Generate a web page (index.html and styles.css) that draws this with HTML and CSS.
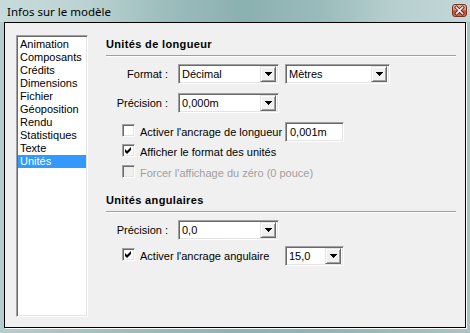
FILE: index.html
```html
<!DOCTYPE html>
<html lang="fr">
<head>
<meta charset="utf-8">
<title>Infos sur le modèle</title>
<link rel="stylesheet" href="styles.css">
</head>
<body>
<div class="window">
  <div class="titlebar">
    <span class="title">Infos sur le modèle</span>
    <span class="close">
      <svg width="13" height="11" viewBox="0 0 13 11"><path d="M3.5 2.5 L9.5 8.5 M9.5 2.5 L3.5 8.5" stroke="#5a1a10" stroke-width="3.2" stroke-linecap="square"/><path d="M3.5 2.5 L9.5 8.5 M9.5 2.5 L3.5 8.5" stroke="#fff" stroke-width="1.6" stroke-linecap="square"/></svg>
    </span>
  </div>
  <div class="frame">
    <div class="panel">
      <ul class="list">
        <li>Animation</li>
        <li>Composants</li>
        <li>Crédits</li>
        <li>Dimensions</li>
        <li>Fichier</li>
        <li>Géoposition</li>
        <li>Rendu</li>
        <li>Statistiques</li>
        <li>Texte</li>
        <li class="selected">Unités</li>
      </ul>
      <div class="content">
        <div class="group-title">Unités de longueur</div>
        <div class="field row-format">
          <span class="lbl">Format :</span>
          <div class="combo w-main"><span class="val">Décimal</span><span class="btn"><svg width="7" height="4" viewBox="0 0 7 4"><rect x="0" y="0" width="7" height="1"/><rect x="1" y="1" width="5" height="1"/><rect x="2" y="2" width="3" height="1"/><rect x="3" y="3" width="1" height="1"/></svg></span></div>
          <div class="combo w-unit"><span class="val">Mètres</span><span class="btn"><svg width="7" height="4" viewBox="0 0 7 4"><rect x="0" y="0" width="7" height="1"/><rect x="1" y="1" width="5" height="1"/><rect x="2" y="2" width="3" height="1"/><rect x="3" y="3" width="1" height="1"/></svg></span></div>
        </div>
        <div class="field row-prec">
          <span class="lbl">Précision :</span>
          <div class="combo w-main"><span class="val">0,000m</span><span class="btn"><svg width="7" height="4" viewBox="0 0 7 4"><rect x="0" y="0" width="7" height="1"/><rect x="1" y="1" width="5" height="1"/><rect x="2" y="2" width="3" height="1"/><rect x="3" y="3" width="1" height="1"/></svg></span></div>
        </div>
        <div class="check-row row-snap">
          <span class="box"></span>
          <span class="ctext">Activer l'ancrage de longueur</span>
          <div class="textbox w-small">0,001m</div>
        </div>
        <div class="check-row short row-show">
          <span class="box"><svg width="9" height="9" viewBox="0 0 9 9"><polygon points="1,3 3,5 7,1 7,4 3,8 1,6"/></svg></span>
          <span class="ctext">Afficher le format des unités</span>
        </div>
        <div class="check-row short disabled row-force">
          <span class="box"></span>
          <span class="ctext">Forcer l'affichage du zéro (0 pouce)</span>
        </div>

        <div class="group-title second">Unités angulaires</div>
        <div class="field row-prec2">
          <span class="lbl">Précision :</span>
          <div class="combo w-main"><span class="val">0,0</span><span class="btn"><svg width="7" height="4" viewBox="0 0 7 4"><rect x="0" y="0" width="7" height="1"/><rect x="1" y="1" width="5" height="1"/><rect x="2" y="2" width="3" height="1"/><rect x="3" y="3" width="1" height="1"/></svg></span></div>
        </div>
        <div class="check-row row-angle">
          <span class="box"><svg width="9" height="9" viewBox="0 0 9 9"><polygon points="1,3 3,5 7,1 7,4 3,8 1,6"/></svg></span>
          <span class="ctext">Activer l'ancrage angulaire</span>
          <div class="combo w-small"><span class="val">15,0</span><span class="btn"><svg width="7" height="4" viewBox="0 0 7 4"><rect x="0" y="0" width="7" height="1"/><rect x="1" y="1" width="5" height="1"/><rect x="2" y="2" width="3" height="1"/><rect x="3" y="3" width="1" height="1"/></svg></span></div>
        </div>
      </div>
    </div>
  </div>
</div>
</body>
</html>
```
FILE: styles.css
```css
* { box-sizing: border-box; }
html, body { margin: 0; padding: 0; }
body {
  width: 470px;
  height: 333px;
  overflow: hidden;
  font-family: "Liberation Sans", Arial, sans-serif;
  font-size: 11px;
  color: #000;
}
.window {
  width: 470px;
  height: 333px;
  display: flex;
  flex-direction: column;
  background: linear-gradient(to right, #b6cdcd 0%, #a3c0c0 20%, #8fb2b2 50%, #93b5b5 70%, #a9c4c4 100%);
}
.titlebar {
  height: 22px;
  flex: none;
  display: flex;
  justify-content: space-between;
  align-items: flex-start;
  background: linear-gradient(to right, #c8dbdb 0%, #bcd2d2 18%, #9dbdbd 35%, #8bb0b0 52%, #9abbbb 68%, #b9d0d0 85%, #c3d8d8 100%);
}
.title {
  font-family: "Noto Sans", "Open Sans", sans-serif;
  font-size: 11.5px;
  line-height: 16px;
  padding: 4px 0 0 7px;
  color: #000;
}
.close {
  width: 15px;
  height: 13px;
  margin: 4px 3px 0 0;
  border: 1px solid #7a3222;
  border-radius: 3px;
  background: linear-gradient(#eeb29e 0%, #e08a70 45%, #c8502f 55%, #d66a48 100%);
  display: flex;
  align-items: center;
  justify-content: center;
}
.close svg { display: block; }
.frame {
  flex: 1;
  padding: 0 4px 5px 4px;
  display: flex;
}
.panel {
  flex: 1;
  border: 1px solid #000;
  box-shadow: 1px 1px 0 #fff;
  background-color: #f0f0f0;
  display: flex;
  align-items: flex-start;
  padding: 12px 0 0 11px;
}
.list {
  list-style: none;
  margin: 0;
  padding: 1px 0 0 0;
  width: 72px;
  height: 282px;
  background: #fff;
  border: 1px solid;
  border-color: #a0a0a0 #fff #fff #a0a0a0;
  box-shadow: inset 1px 1px 0 #696969, inset -1px -1px 0 #e3e3e3;
  flex: none;
}
.list li {
  height: 13px;
  line-height: 13px;
  padding-left: 2px;
  margin-left: 1px;
  margin-right: 1px;
  white-space: nowrap;
}
.list li:first-child { margin-top: 1px; }
.list li.selected {
  background: #3399ff;
  color: #fff;
}
.content {
  margin-left: 18px;
  width: 350px;
  display: flex;
  flex-direction: column;
}
.group-title {
  font-weight: bold;
  letter-spacing: 0.35px;
  line-height: 14px;
  margin-top: 2px;
  padding-bottom: 4px;
  border-bottom: 1px solid #a0a0a0;
  box-shadow: 0 1px 0 #fff;
}
.group-title.second { margin-top: 12px; }
.field {
  display: flex;
  align-items: center;
  height: 20px;
}
.row-format { margin-top: 8px; }
.row-prec { margin-top: 9px; }
.row-prec2 { margin-top: 8px; }
.lbl {
  width: 64px;
  text-align: right;
  padding-right: 2px;
  margin-right: 8px;
  white-space: nowrap;
}
.combo, .textbox {
  height: 20px;
  background: #fff;
  border: 1px solid;
  border-color: #a0a0a0 #fff #fff #a0a0a0;
  box-shadow: inset 1px 1px 0 #696969, inset -1px -1px 0 #e3e3e3;
  padding: 2px;
  display: flex;
  align-items: center;
  flex: none;
}
.w-main { width: 101px; }
.w-unit { width: 105px; margin-left: 6px; }
.w-small { width: 59px; }
.val {
  flex: 1;
  padding-left: 1px;
  line-height: 16px;
  white-space: nowrap;
}
.textbox { padding-left: 4px; }
.btn {
  width: 16px;
  height: 16px;
  background: #f0f0f0;
  border: 1px solid;
  border-color: #e3e3e3 #696969 #696969 #e3e3e3;
  box-shadow: inset 1px 1px 0 #fff, inset -1px -1px 0 #a0a0a0;
  display: flex;
  align-items: center;
  justify-content: center;
  flex: none;
}
.btn svg { display: block; fill: #000; }
.check-row {
  display: flex;
  align-items: center;
  height: 20px;
  padding-left: 16px;
}
.check-row.short { height: 16px; }
.row-snap { margin-top: 9px; }
.row-show { margin-top: 2px; }
.row-force { margin-top: 5px; }
.row-angle { margin-top: 6px; }
.box {
  width: 13px;
  height: 13px;
  flex: none;
  background: #fff;
  border: 1px solid;
  border-color: #a0a0a0 #fff #fff #a0a0a0;
  box-shadow: inset 1px 1px 0 #696969, inset -1px -1px 0 #e3e3e3;
  margin-right: 5px;
  margin-bottom: 3px;
  display: flex;
  align-items: center;
  justify-content: center;
}
.box svg { display: block; fill: #000; }
.ctext {
  width: 145px;
  white-space: nowrap;
}
.check-row.short .ctext { width: auto; }
.disabled { color: #a0a0a0; }
.disabled .box { background: #f0f0f0; }
```
